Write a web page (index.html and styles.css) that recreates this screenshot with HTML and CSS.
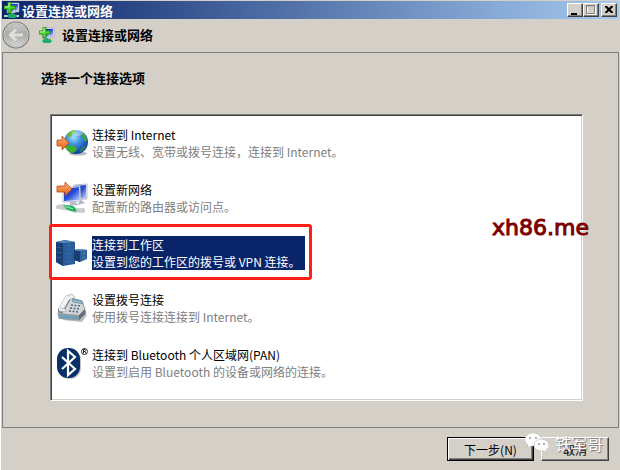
FILE: index.html
```html
<!DOCTYPE html>
<html lang="zh-CN">
<head>
  <meta charset="UTF-8">
  <meta name="viewport" content="width=device-width, initial-scale=1.0">
  <title>设置连接或网络</title>
  <link rel="stylesheet" href="styles.css">
</head>
<body>
  <svg width="0" height="0" class="defs" aria-hidden="true">
    <defs>
      <linearGradient id="orange" x1="0" y1="0" x2="0" y2="1">
        <stop offset="0" stop-color="#ffb27a"/>
        <stop offset="1" stop-color="#e5600f"/>
      </linearGradient>
      <linearGradient id="screen" x1="0" y1="0" x2="1" y2="1">
        <stop offset="0" stop-color="#0a1fae"/>
        <stop offset="0.5" stop-color="#2b4ed8"/>
        <stop offset="1" stop-color="#c8dcff"/>
      </linearGradient>
      <radialGradient id="globe" cx="0.4" cy="0.3" r="0.7">
        <stop offset="0" stop-color="#a8e0ff"/>
        <stop offset="0.45" stop-color="#3c8ee0"/>
        <stop offset="1" stop-color="#0d3a9c"/>
      </radialGradient>
      <linearGradient id="back" x1="0" y1="0" x2="0" y2="1">
        <stop offset="0" stop-color="#c9c9c7"/>
        <stop offset="0.5" stop-color="#aaaaa8"/>
        <stop offset="1" stop-color="#d6d6d4"/>
      </linearGradient>
      <symbol id="network" viewBox="0 0 16 16">
        <path d="M6 1h9v9H6z" fill="#dfe8f5" stroke="#8d9bb5" stroke-width="0.6"/>
        <path d="M7 2h7v7H7z" fill="url(#screen)"/>
        <path d="M3 4h8v7H3z" fill="#e4ecf8" stroke="#8d9bb5" stroke-width="0.6"/>
        <path d="M4 5h6v5H4z" fill="url(#screen)"/>
        <path d="M8 11v2" stroke="#3c9c6c" stroke-width="2"/>
        <path d="M0 14h15" stroke="#b5dfc8" stroke-width="2"/>
        <path d="M3 14l2-2h6l2 2-2 2H5z" fill="#1eaa68"/>
        <path d="M4 0h3v4h4v3H7v4H4V7H0V4h4z" fill="#4fd82c" stroke="#168a12" stroke-width="0.8"/>
        <path d="M5 1v4H1" stroke="#b4ff9a" fill="none"/>
      </symbol>
    </defs>
  </svg>
  <div class="window">
    <header class="titlebar">
      <svg class="title-icon"><use href="#network"/></svg>
      <span class="title-text">设置连接或网络</span>
      <button type="button" class="caption-btn" aria-label="最小化">
        <svg viewBox="0 0 12 10"><path d="M2 8h6v2H2z" fill="#000"/></svg>
      </button>
      <button type="button" class="caption-btn" aria-label="最大化" disabled>
        <svg viewBox="0 0 12 10"><path d="M2.500 1.500h8v8h-8z" fill="none" stroke="#fff"/><path d="M1.500 .5h8v8h-8z" fill="none" stroke="#808080"/><path d="M1 1h9" stroke="#808080"/></svg>
      </button>
      <button type="button" class="caption-btn close" aria-label="关闭">
        <svg viewBox="0 0 12 10"><path d="M2 1h2l2 2 2-2h2v1L7.500 4.500 10 7v1H8L6 6 4 8H2V7l2.500-2.500L2 2z" fill="#000"/></svg>
      </button>
    </header>

    <nav class="navbar">
      <button type="button" class="back-btn" aria-label="后退" disabled>
        <svg viewBox="0 0 28 28">
          <circle cx="14" cy="14" r="13" fill="#efefed" stroke="#777" stroke-width="1.200"/>
          <circle cx="14" cy="14" r="11.500" fill="url(#back)" stroke="#999" stroke-width="0.600"/>
          <path d="M21 14H9M14 8.500L8.500 14l5.500 5.500" fill="none" stroke="#dededc" stroke-width="3"/>
        </svg>
      </button>
      <svg class="nav-icon"><use href="#network"/></svg>
      <span class="nav-text">设置连接或网络</span>
    </nav>

    <main class="page">
      <h1 class="heading">选择一个连接选项</h1>
      <div class="list-box">
        <ul class="options">
          <li>
            <button type="button" class="option">
              <svg class="option-icon" viewBox="0 0 32 32">
                <ellipse cx="22" cy="26.500" rx="9" ry="2" fill="#bbb"/>
                <circle cx="20" cy="15" r="12" fill="url(#globe)"/>
                <path d="M15 4c2-1 4-1 5 0-1 2-2 3-4 4-1 2-4 2-5 3 0-3 1-5 4-7z" fill="#64b83c"/>
                <path d="M26 5c3 2 5 5 5 9-2 1-4-1-4-3-2-1-3-4-1-6z" fill="#3da447"/>
                <path d="M12 19c4-2 9 1 9 4-2 2-4 3-5 3-4-1-6-4-7-7z" fill="#3fae2e"/>
                <path d="M25 22c2-2 3-3 5-3-1 3-3 5-6 6 0-1 0-2 1-3z" fill="#298d42"/>
                <ellipse cx="21" cy="6" rx="6" ry="3" fill="#fff" opacity=".35"/>
                <path d="M1 13h5V9l7 7-7 7v-4H1z" fill="url(#orange)" stroke="#b84a16" stroke-width=".8"/>
              </svg>
              <span class="option-text">
                <span class="option-title">连接到 Internet</span>
                <span class="option-desc">设置无线、宽带或拨号连接，连接到 Internet。</span>
              </span>
            </button>
          </li>
          <li>
            <button type="button" class="option">
              <svg class="option-icon" viewBox="0 0 32 32">
                <path d="M18 3l13-1v15l-13 1z" fill="#e8edf4" stroke="#9ca6b5" stroke-width=".7"/>
                <path d="M19 4l11-1v13l-11 1z" fill="url(#screen)"/>
                <path d="M25 18l4 3-8 2z" fill="#aeb5c2"/>
                <path d="M7 6l17-2 1 15-18 1z" fill="#eef2f8" stroke="#9ca6b5" stroke-width=".7"/>
                <path d="M8 7l15-2 1 13-16 1z" fill="url(#screen)"/>
                <path d="M14 20l5-1 3 4-8 1z" fill="#b8bec9"/>
                <path d="M2 25l25 4M2 25l6-1M19 29l8-1" stroke="#c8cdcb" stroke-width="4" stroke-linecap="round"/>
                <path d="M7 24c5-2 7 0 9 0 3 0 3 3 5 5-5 1-6 0-8-1-3 0-3-3-6-4z" fill="#18a957"/>
                <path d="M9 24l8 3" stroke="#7ee3a2" stroke-width="1.500"/>
                <path d="M1 4h8V0l7 7-7 7v-4H1z" fill="url(#orange)" stroke="#b84a16" stroke-width=".8"/>
              </svg>
              <span class="option-text">
                <span class="option-title">设置新网络</span>
                <span class="option-desc">配置新的路由器或访问点。</span>
              </span>
            </button>
          </li>
          <li>
            <button type="button" class="option selected">
              <svg class="option-icon" viewBox="0 0 32 32">
                <path d="M0 5l9-2 10 2v22L7 29 0 25z" fill="#285b99"/>
                <path d="M0 5l7 1v23l-7-4z" fill="#173f73"/>
                <path d="M0 5l9-2 10 2-12 1z" fill="#5387bc"/>
                <path d="M9 9l8-1M9 13l8-1M9 17l8-1M9 21l8-1M9 25l8-1M1 10l5 1M1 15l5 1M1 20l5 1M13 6v22" stroke="#3a6da6" stroke-width=".7"/>
                <path d="M18 13l6-1 7 1v9l-7 3-6-2z" fill="#2e6199"/>
                <path d="M18 13l6 1v11l-6-2z" fill="#183e70"/>
                <path d="M18 13l6-1 7 1-7 1z" fill="#6593bf"/>
                <path d="M25 17l5-1M25 21l5-1M28 14v9" stroke="#4d7eae" stroke-width=".7"/>
              </svg>
              <span class="option-text">
                <span class="option-title">连接到工作区</span>
                <span class="option-desc">设置到您的工作区的拨号或 VPN 连接。</span>
              </span>
            </button>
          </li>
          <li>
            <button type="button" class="option">
              <svg class="option-icon" viewBox="0 0 32 32">
                <path d="M6 28l20 2 5-7-5-5z" fill="#777" opacity=".5"/>
                <path d="M12 5l14 4 4 12-7 7-20-2-1-5z" fill="#d2d6d8" stroke="#7e878e" stroke-width=".8"/>
                <path d="M2 21l21 2v5L3 27z" fill="#8d9ba5"/>
                <path d="M23 23l6-6v5l-6 6z" fill="#626d75"/>
                <path d="M4 24.500l17 1.500" stroke="#4ba7d0" stroke-width="2" stroke-dasharray="2 1"/>
                <path d="M16 7l10 2 1 3-10-2z" fill="#8ebcd2" stroke="#5b7888" stroke-width=".6"/>
                <path d="M15 13l9 1M14 16l9 1M13 19l9 1" stroke="#4f6c7e" stroke-width="1.500" stroke-dasharray="2 1.500"/>
                <path d="M12 6L5 18" stroke="#737b80" stroke-width="6" stroke-linecap="round"/>
                <path d="M12 5L5 17" stroke="#f3f4f4" stroke-width="4.500" stroke-linecap="round"/>
                <path d="M11 4l5-2 3 3-5 3M4 16l6 1-1 3-6-1" fill="#edf0f1" stroke="#899198" stroke-width=".5"/>
              </svg>
              <span class="option-text">
                <span class="option-title">设置拨号连接</span>
                <span class="option-desc">使用拨号连接连接到 Internet。</span>
              </span>
            </button>
          </li>
          <li>
            <button type="button" class="option">
              <svg class="option-icon" viewBox="0 0 32 32">
                <rect x="2" y="2" width="23" height="30" rx="11" fill="#aaa" opacity=".7"/>
                <rect x="1" y="1" width="23" height="30" rx="11" fill="#073067"/>
                <path d="M6 10l13 12-7 6V4l7 6L6 22" fill="none" stroke="#fff" stroke-width="2.200"/>
                <circle cx="28.500" cy="4.500" r="3" fill="none" stroke="#000" stroke-width=".8"/>
                <path d="M27.500 6.500v-4h1.500q1 1 0 2h-1.500M29 4.500l1 2" fill="none" stroke="#000" stroke-width=".8"/>
              </svg>
              <span class="option-text">
                <span class="option-title">连接到 Bluetooth 个人区域网(PAN)</span>
                <span class="option-desc">设置到启用 Bluetooth 的设备或网络的连接。</span>
              </span>
            </button>
          </li>
        </ul>
        <span class="site-mark">xh86.me</span>
      </div>
    </main>

    <footer class="actions">
      <button type="button" class="btn btn-default">下一步(N)</button>
      <button type="button" class="btn btn-cancel">取消</button>
      <div class="author-mark">
        <svg viewBox="0 0 24 20">
          <path d="M8 0C3 0 0 3 0 7c0 2 1 4 3 5l-1 3 4-2h3c5 0 8-3 8-6s-4-7-9-7z" fill="#fff" stroke="#aaa" stroke-width=".5"/>
          <path d="M16 6c-4 0-7 3-7 6s3 6 7 6h3l3 2-1-3c2-1 3-3 3-5 0-3-4-6-8-6z" fill="#fff" stroke="#aaa" stroke-width=".5"/>
          <path d="M5 4v2M11 4v2M14 10v2M19 10v2" stroke="#999" stroke-width="1.500"/>
        </svg>
        <span>铁军哥</span>
      </div>
    </footer>
  </div>
</body>
</html>
```
FILE: styles.css
```css
* {
  box-sizing: border-box;
}
body {
  margin: 0;
  background-color: #d4d0c8;
  color: #000;
  font-family: "Noto Sans CJK SC", sans-serif;
  font-size: 12px;
}
button {
  font-family: inherit;
  font-size: inherit;
  color: inherit;
  padding: 0;
}
.defs {
  position: absolute;
}
.window {
  min-height: 100vh;
  display: flex;
  flex-direction: column;
  padding: 1px 1px 0;
  border-left: 1px solid #fff;
}
.titlebar {
  display: flex;
  align-items: center;
  height: 18px;
  padding-right: 2px;
  background: linear-gradient(to right, #0a246a, #a6caf0);
  color: #fff;
  font-weight: bold;
  font-size: 13px;
}
.title-icon {
  width: 16px;
  height: 16px;
  margin: 0 2px;
}
.title-text {
  flex: 1;
}
.caption-btn {
  display: flex;
  align-items: center;
  justify-content: center;
  width: 16px;
  height: 14px;
  background-color: #d4d0c8;
  border: 1px solid;
  border-color: #fff #404040 #404040 #fff;
  box-shadow: inset -1px -1px #808080;
}
.caption-btn svg {
  width: 12px;
  height: 10px;
}
.caption-btn.close {
  margin-left: 2px;
}
.navbar {
  display: flex;
  align-items: center;
  height: 33px;
  padding-bottom: 2px;
  font-size: 13px;
  font-weight: bold;
}
.back-btn {
  width: 28px;
  height: 28px;
  border: none;
  background: none;
}
.back-btn svg {
  display: block;
}
.nav-icon {
  width: 16px;
  height: 16px;
  margin: 0 7px 0 9px;
}
.page {
  flex: 1;
  display: flex;
  flex-direction: column;
  border: 1px solid #808080;
  padding: 15px 35px 26px 47px;
}
.heading {
  margin: 0 0 26px -9px;
  font-size: 13px;
  line-height: 20px;
}
.list-box {
  position: relative;
  flex: 1;
  background-color: #fff;
  border: 1px solid;
  border-color: #808080 #fff #fff #808080;
  box-shadow: inset 1px 1px #404040, inset -1px -1px #d4d0c8;
  padding: 11px 5px;
}
.options {
  display: flex;
  flex-direction: column;
  gap: 21px;
  margin: 0;
  padding: 0;
  list-style: none;
}
.option {
  position: relative;
  display: flex;
  align-items: center;
  gap: 4px;
  border: none;
  background: none;
  text-align: left;
}
.option-icon {
  width: 32px;
  height: 32px;
}
.option-text {
  display: flex;
  flex-direction: column;
  padding-right: 4px;
  line-height: 17px;
  white-space: nowrap;
}
.option-desc {
  color: #808080;
}
.selected .option-text {
  background-color: #0a246a;
  color: #fff;
}
.selected .option-desc {
  color: #fff;
}
/* red frame round the option to pick */
.selected::after {
  content: "";
  position: absolute;
  inset: -12px -7px -10px;
  border: 3px solid #ff1f14;
  border-radius: 3px;
}
.site-mark {
  position: absolute;
  right: -7px;
  top: 100px;
  color: #7d0000;
  font-family: "DejaVu Sans", sans-serif;
  font-size: 22px;
  line-height: 26px;
  -webkit-text-stroke: 1px #7d0000;
}
.actions {
  position: relative;
  display: flex;
  justify-content: flex-end;
  gap: 7px;
  padding: 9px 10px;
}
.btn {
  height: 24px;
  background-color: #d4d0c8;
  border: 1px solid;
  border-color: #fff #404040 #404040 #fff;
  box-shadow: inset -1px -1px #808080;
}
.btn-default {
  width: 87px;
  border-color: #000;
  box-shadow: inset 1px 1px #fff, inset -1px -1px #404040, inset -2px -2px #808080;
}
.btn-cancel {
  width: 68px;
}
.author-mark {
  position: absolute;
  right: 16px;
  top: 3px;
  display: flex;
  align-items: center;
  gap: 6px;
  color: #fff;
  font-size: 16px;
  line-height: 24px;
  text-shadow: 1px 1px 1px #777;
  pointer-events: none;
}
.author-mark svg {
  width: 24px;
  height: 20px;
}
```
